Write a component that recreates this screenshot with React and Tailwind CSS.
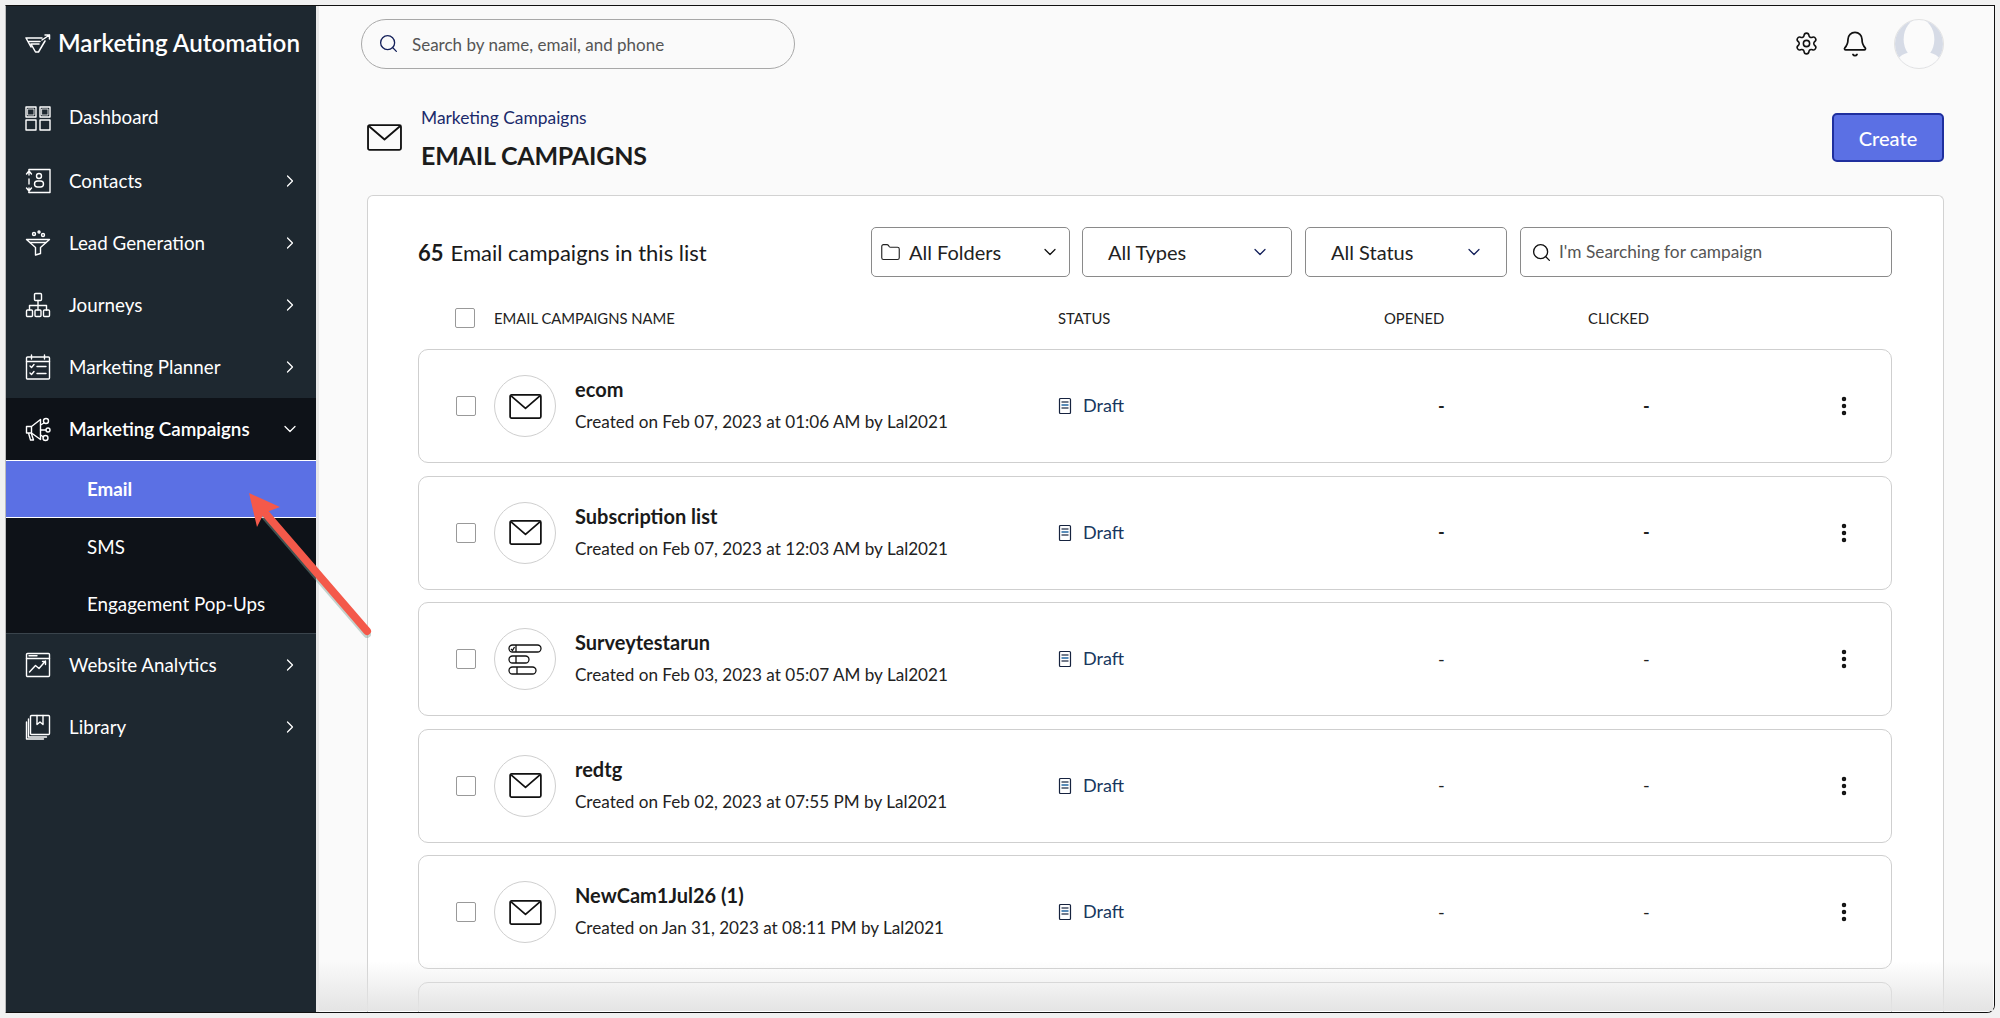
import { Bell, ChevronDown, ChevronRight, EllipsisVertical, Folder, Search, Settings } from "lucide-react";

const campaigns = [
  { name: "ecom", created: "Created on Feb 07, 2023 at 01:06 AM by Lal2021", dash: "font-bold" },
  { name: "Subscription list", created: "Created on Feb 07, 2023 at 12:03 AM by Lal2021", dash: "font-bold" },
  { name: "Surveytestarun", created: "Created on Feb 03, 2023 at 05:07 AM by Lal2021", survey: true },
  { name: "redtg", created: "Created on Feb 02, 2023 at 07:55 PM by Lal2021" },
  { name: "NewCam1Jul26 (1)", created: "Created on Jan 31, 2023 at 08:11 PM by Lal2021" },
];

function Icon({ children }) {
  return (
    <svg viewBox="0 0 26 26" fill="none" stroke="currentColor" strokeWidth="1.4" strokeLinejoin="round" strokeLinecap="round" className="w-[26px] h-[26px] shrink-0">
      {children}
    </svg>
  );
}

const DashboardIcon = () => (
  <Icon>
    <rect x="1" y="2" width="10" height="10" />
    <rect x="15" y="2" width="10" height="10" />
    <rect x="1" y="15" width="10" height="10" />
    <rect x="15" y="15" width="10" height="10" />
    <rect x="3" y="4" width="6" height="6" strokeWidth="0.8" />
    <rect x="17" y="4" width="6" height="6" strokeWidth="0.8" />
  </Icon>
);
const ContactsIcon = () => (
  <Icon>
    <path d="M4 1.5h21v23H4" />
    <path d="M4 2v5M4 11v5M4 20v4.5M1.5 20l2.5 3 2.5-3M1.5 6l2.5-3 2.5 3" />
    <circle cx="14" cy="8" r="2.5" />
    <rect x="9.5" y="13" width="9" height="6" rx="3" />
  </Icon>
);
const LeadIcon = () => (
  <Icon>
    <path d="M1.5 9.5h23l-9 8v6l-5 1.5v-7.500z" />
    <path d="M5 12.500h16" />
    <circle cx="9" cy="4" r="1.500" />
    <circle cx="14" cy="2" r="1" />
    <circle cx="18" cy="5" r="1.500" />
  </Icon>
);
const JourneysIcon = () => (
  <Icon>
    <rect x="9.500" y="1.500" width="7" height="7" rx="1" />
    <path d="M13 8.500v5M4.500 18v-4.500h17V18M13 13.500V18" />
    <rect x="1.500" y="18" width="6" height="6.500" rx="1" />
    <rect x="10" y="18" width="6" height="6.500" rx="1" />
    <rect x="18.500" y="18" width="6" height="6.500" rx="1" />
  </Icon>
);
const PlannerIcon = () => (
  <Icon>
    <rect x="1.500" y="3" width="23" height="22" rx="1" />
    <path d="M6.500 1v4M19.500 1v4M1.500 7.500h23" />
    <path d="M5 12l1.500 1.500 2.500-3M5 19l1.500 1.500 2.500-3M12 12.500h9M12 19.500h9" />
  </Icon>
);
const CampaignsIcon = () => (
  <Icon>
    <path d="M1.500 10.500h5v6.500h-5zM6.500 10.500l9-7v20l-9-6.500zM3.500 17l2 7h3l-2-6" />
    <circle cx="21" cy="5" r="2.500" />
    <circle cx="23" cy="14" r="2" />
    <circle cx="20.500" cy="22" r="2.500" />
    <path d="M15.500 9l3.500-2M15.500 14h5.500M15.500 19l3 2" />
  </Icon>
);
const AnalyticsIcon = () => (
  <Icon>
    <rect x="1.500" y="1.500" width="23" height="23" rx="1" />
    <path d="M1.500 6.500h23M4 3.800h8" />
    <path d="M4.500 20l6-6.500 3.500 3 6.500-7.500M17.500 9.500h3v3" />
  </Icon>
);
const LibraryIcon = () => (
  <Icon>
    <rect x="5.500" y="1.500" width="19" height="19" rx="1" />
    <path d="M3.500 5v18h18M1.500 8v17h17" />
    <path d="M12 1.500v9l3-2.500 3 2.500v-9" />
  </Icon>
);

const navTop = [
  { label: "Contacts", icon: ContactsIcon },
  { label: "Lead Generation", icon: LeadIcon },
  { label: "Journeys", icon: JourneysIcon },
  { label: "Marketing Planner", icon: PlannerIcon },
];
const navBottom = [
  { label: "Website Analytics", icon: AnalyticsIcon },
  { label: "Library", icon: LibraryIcon },
];

function NavItem({ label, icon: NavIcon }) {
  return (
    <div className="h-[62px] flex items-center pl-[19px] pr-4">
      <NavIcon />
      <span className="ml-[18px] flex-1">{label}</span>
      <ChevronRight size={20} strokeWidth={1.5} />
    </div>
  );
}

const MailIcon = ({ className }) => (
  <svg viewBox="0 0 34 26" fill="none" stroke="currentColor" strokeWidth="1.800" strokeLinejoin="round" className={className}>
    <rect x="1" y="1" width="32" height="24" rx="1.500" />
    <path d="M2 2l15 13L32 2" />
  </svg>
);

const SurveyIcon = () => (
  <svg viewBox="0 0 34 31" fill="none" stroke="currentColor" strokeWidth="1.300" className="w-[34px] h-[31px]">
    <rect x="1" y="1" width="32" height="7" rx="3.500" />
    <rect x="1" y="12" width="20" height="7" rx="3.500" />
    <rect x="1" y="23" width="27" height="7" rx="3.500" />
    <path d="M8 1v7M8 12v7M9 23v7M3 5l1.500 1.500L6.500 3" />
  </svg>
);

const DraftIcon = () => (
  <svg viewBox="0 0 14 17" fill="none" stroke="#16233f" strokeWidth="1.200" className="w-[14px] h-[17px] shrink-0">
    <path d="M2.500 1.500h9a1 1 0 0 1 1 1v13a1 1 0 0 1-1 1h-9a1 1 0 0 1-1-1v-13a1 1 0 0 1 1-1z" />
    <path d="M3.500 5h7" />
    <path d="M3.500 8h7" stroke="#2f6fa8" strokeWidth="1.600" />
    <path d="M3.500 11h7" />
  </svg>
);

function Dropdown({ box, icon, label, chevron = "text-[#111]" }) {
  return (
    <div className={`${box} h-[50px] flex items-center border border-[#8a8a8a] rounded-[5px] text-[20px] text-[#222]`}>
      {icon}
      <span className="flex-1">{label}</span>
      <ChevronDown size={20} strokeWidth={1.500} className={chevron} />
    </div>
  );
}

function Checkbox() {
  return <div className="w-5 h-5 shrink-0 border border-[#999] rounded-[2px] bg-white"></div>;
}

function CampaignRow({ item }) {
  return (
    <div className="h-[114px] mb-[12.500px] shrink-0 border border-[#cfcfcf] rounded-[10px] bg-white grid grid-cols-[639px_322px_205px_215px_1fr] items-center">
      <div className="flex items-center pl-[37px]">
        <Checkbox />
        <div className="ml-[18px] w-[62px] h-[62px] shrink-0 rounded-full border border-[#cfcfcf] flex items-center justify-center text-[#111]">
          {item.survey ? <SurveyIcon /> : <MailIcon className="w-[33px] h-[25px]" />}
        </div>
        <div className="ml-[19px] min-w-0 pb-[2px]">
          <div className="text-[20px] font-bold text-[#1a1a1a] leading-[26px]">{item.name}</div>
          <div className="text-[17.100px] text-[#222] leading-[24px] mt-[8px] whitespace-nowrap">{item.created}</div>
        </div>
      </div>
      <div className="flex items-center gap-[11px] text-[18px] text-[#17375e] pb-[1px]">
        <DraftIcon />
        <span>Draft</span>
      </div>
      <div className={`pl-[58px] text-[18px] text-[#222] ${item.dash || ""}`}>-</div>
      <div className={`pl-[58px] text-[18px] text-[#222] ${item.dash || ""}`}>-</div>
      <div className="pl-[32px] text-[#111]">
        <EllipsisVertical size={24} strokeWidth={2.500} />
      </div>
    </div>
  );
}

export default function App() {
  return (
    <div className="relative w-[2000px] h-[1018px] overflow-hidden bg-[#f1f1f1] p-[5px] font-['Lato','Noto_Sans',sans-serif]">
      <div className="flex h-full border border-[#111] border-l-[#bbb] rounded-br-[8px] overflow-hidden">
        {/* Sidebar */}
        <aside className="w-[310px] shrink-0 bg-[#1e2830] text-white text-[18.800px] border-r-[3px] border-[#e9e9e9] box-content">
          <div className="h-[79px] pb-[4px] flex items-center pl-[19px]">
            <svg viewBox="0 0 26 20" fill="none" stroke="currentColor" strokeWidth="1.500" strokeLinecap="round" strokeLinejoin="round" className="w-[26px] h-[20px]">
              <path d="M1 4h16M1 4l5 9M20 7l-6.500 11-3 0L6 10h8M4 7.500h11M17 6l7.500-5M20 1h4.500v4" />
            </svg>
            <span className="ml-[7px] text-[24.200px] font-semibold">Marketing Automation</span>
          </div>
          <div className="h-[65px] flex items-center pl-[19px]">
            <DashboardIcon />
            <span className="ml-[18px]">Dashboard</span>
          </div>
          {navTop.map((n) => (
            <NavItem key={n.label} {...n} />
          ))}
          <div className="h-[236px] bg-[#0e1218] border-b border-[#3a444c]">
            <div className="h-[62px] flex items-center pl-[19px] pr-4 font-semibold">
              <CampaignsIcon />
              <span className="ml-[18px] flex-1">Marketing Campaigns</span>
              <ChevronDown size={20} strokeWidth={1.500} />
            </div>
            <div className="h-[58px] flex items-center pl-[81px] bg-[#5b70e4] border-y border-white font-bold">Email</div>
            <div className="h-[58px] flex items-center pl-[81px]">SMS</div>
            <div className="h-[57px] flex items-center pl-[81px]">Engagement Pop-Ups</div>
          </div>
          {navBottom.map((n) => (
            <NavItem key={n.label} {...n} />
          ))}
        </aside>

        {/* Main */}
        <main className="flex-1 min-w-0 flex flex-col bg-[#fafafa]">
          <div className="shrink-0 h-[49px] mt-[13px] pl-[42px] pr-[50px] flex items-center justify-between">
            <div className="w-[434px] h-[50px] rounded-full border border-[#a8a8a8] flex items-center pl-[16px] text-[#555] text-[17px]">
              <Search size={21} strokeWidth={1.500} className="text-[#14205a]" />
              <span className="ml-[13px] pt-[3px]">Search by name, email, and phone</span>
            </div>
            <div className="flex items-center text-[#111]">
              <Settings size={25} strokeWidth={1.500} />
              <Bell size={28} strokeWidth={1.500} className="ml-[22px]" />
              <div className="ml-[25px] w-[50px] h-[50px] rounded-full border border-[#e2e2e2] overflow-hidden">
                <svg viewBox="0 0 50 50" className="w-full h-full">
                  <rect width="50" height="50" fill="#d6dbe6" />
                  <ellipse cx="25" cy="20" rx="16" ry="21" fill="#fbfbfb" />
                  <path d="M0 50c1-14 12-17 25-17s24 3 25 17z" fill="#fbfbfb" />
                </svg>
              </div>
            </div>
          </div>

          <div className="shrink-0 h-[49px] mt-[45px] pl-[48px] pr-[50px] flex items-center">
            <MailIcon className="w-[35px] h-[27px] text-[#111]" />
            <div className="ml-[19px] flex-1 pt-[2px]">
              <div className="text-[17.400px] text-[#1b2a6b] leading-[22px]">Marketing Campaigns</div>
              <div className="text-[25px] font-bold text-[#1c1c1c] leading-[30px] mt-[11px] tracking-[-0.2px]">EMAIL CAMPAIGNS</div>
            </div>
            <button className="w-[112px] h-[49px] rounded-[5px] bg-[#5b70e4] border-2 border-[#1f2f9e] text-white text-[20px] font-medium">Create</button>
          </div>

          <section className="flex-1 min-h-0 overflow-hidden mt-[33px] ml-[48px] mr-[50px] border border-b-0 border-[#d2d2d2] rounded-t-[6px] bg-white pl-[50px] pr-[51px] pt-[31px] flex flex-col">
            <div className="shrink-0 h-[50px] flex items-center text-[22px] text-[#1a1a1a]">
              <div className="flex-1">
                <span className="font-bold">65</span>
                <span className="ml-[7px]">Email campaigns in this list</span>
              </div>
              <Dropdown
                box="w-[199px] pl-[8px] pr-[9px]"
                icon={<Folder size={21} strokeWidth={1.300} className="mr-[8px]" />}
                label="All Folders"
              />
              <Dropdown box="w-[210px] ml-[12px] pl-[25px] pr-[21px]" label="All Types" chevron="text-[#14205a]" />
              <Dropdown box="w-[202px] ml-[13px] pl-[25px] pr-[22px]" label="All Status" chevron="text-[#14205a]" />
              <div className="w-[372px] h-[50px] ml-[13px] flex items-center border border-[#8a8a8a] rounded-[5px] pl-[10px] text-[17.300px] text-[#555]">
                <Search size={21} strokeWidth={1.500} className="text-[#111]" />
                <span className="ml-[7px]">I'm Searching for campaign</span>
              </div>
            </div>

            <div className="shrink-0 h-[40px] mt-[21px] mb-[11px] grid grid-cols-[640px_322px_205px_215px_1fr] items-center text-[14.800px] text-[#222]">
              <div className="flex items-center pl-[37px]">
                <Checkbox />
                <span className="ml-[19px]">EMAIL CAMPAIGNS NAME</span>
              </div>
              <span>STATUS</span>
              <span className="pl-[4px]">OPENED</span>
              <span className="pl-[3px]">CLICKED</span>
              <span></span>
            </div>

            {campaigns.map((c) => (
              <CampaignRow key={c.name} item={c} />
            ))}
            <div className="h-[113px] shrink-0 border border-[#cfcfcf] rounded-[10px] bg-white"></div>
          </section>
        </main>
      </div>

      {/* fade at the bottom edge of the window */}
      <div className="absolute left-[319px] right-[7px] bottom-[7px] h-[50px] bg-gradient-to-b from-white/0 to-[#e4e4e4] pointer-events-none"></div>

      {/* annotation arrow */}
      <svg viewBox="0 0 140 160" className="absolute left-[240px] top-[485px] w-[140px] h-[160px] pointer-events-none">
        <path d="M127 149L26 32" stroke="#7fa398" strokeWidth="8" strokeLinecap="round" opacity="0.45" />
        <path d="M127 146L26 29" stroke="#f4594a" strokeWidth="8" strokeLinecap="round" />
        <path d="M9 8l31 14-16 6-7 14z" fill="#f4594a" />
      </svg>
    </div>
  );
}
